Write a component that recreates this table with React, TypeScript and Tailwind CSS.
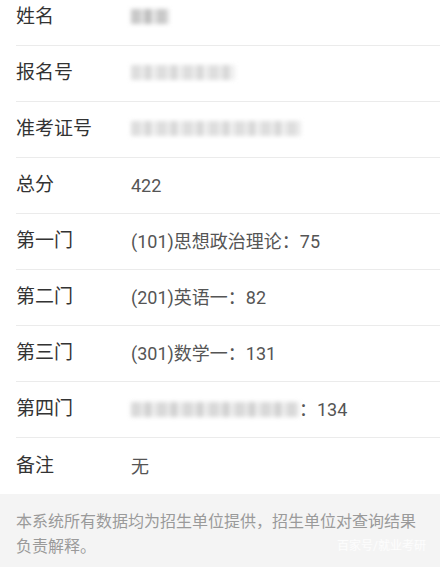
const rows: { label: string; value: React.ReactNode }[] = [
  { label: "姓名", value: <Blur className="h-[15px] w-[38px]" /> },
  { label: "报名号", value: <Blur className="h-[15px] w-[104px] opacity-60" /> },
  { label: "准考证号", value: <Blur className="h-[15px] w-[170px] opacity-60" /> },
  { label: "总分", value: "422" },
  { label: "第一门", value: "(101)思想政治理论：75" },
  { label: "第二门", value: "(201)英语一：82" },
  { label: "第三门", value: "(301)数学一：131" },
  {
    label: "第四门",
    value: (
      <span className="flex items-center">
        <Blur className="h-[15px] w-[168px] opacity-70" />
        <span>：134</span>
      </span>
    ),
  },
  { label: "备注", value: "无" },
];

function Blur({ className }: { className?: string }) {
  return (
    <span
      className={
        "inline-block bg-[repeating-linear-gradient(90deg,#c8c8c8_0px,#c8c8c8_9px,#dedede_9px,#dedede_14px,#bcbcbc_14px,#bcbcbc_20px,#e4e4e4_20px,#e4e4e4_26px)] blur-[2px] " +
        (className ?? "")
      }
    />
  );
}

export default function App() {
  return (
    <div className="h-[567px] w-[440px] overflow-hidden bg-white font-['Roboto','Noto_Sans_CJK_SC',sans-serif]">
      <div className="-mt-[10px] pl-4">
        {rows.map((r, i) => (
          <div
            key={r.label}
            className={
              "flex h-[56px] items-center " + (i < rows.length - 1 ? "border-b border-[#ebebeb]" : "")
            }
          >
            <div className="w-[115px] shrink-0 text-[19px] text-[#333]">{r.label}</div>
            <div className="text-[18px] text-[#555]">{r.value}</div>
          </div>
        ))}
      </div>
      <div className="h-[80px] bg-[#f4f4f4] pl-4 pr-[14px] pt-[15px] text-[16px] leading-[25px] text-[#9a9a9a]">
        <div>本系统所有数据均为招生单位提供，招生单位对查询结果</div>
        <div className="flex items-center justify-between">
          <span>负责解释。</span>
          <span className="text-[12px] text-white/80">百家号/就业考研</span>
        </div>
      </div>
    </div>
  );
}
